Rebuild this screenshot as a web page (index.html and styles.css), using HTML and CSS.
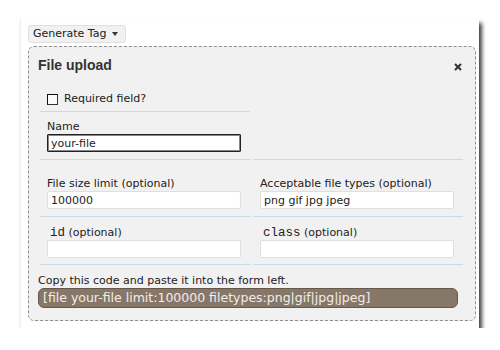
FILE: index.html
```html
<!DOCTYPE html>
<html lang="en">
<head>
  <meta charset="UTF-8" />
  <title>File upload tag</title>
  <link rel="stylesheet" href="styles.css">
</head>
<body>
  <div class="sheet">
    <div class="tag-menu">Generate Tag <span class="caret"></span></div>

    <div class="pane">
      <div class="pane-head">
        <h3>File upload</h3>
        <span class="close">
          <svg width="8" height="8" viewBox="0 0 8 8"><path d="M1 1L7 7M7 1L1 7" stroke="#333" stroke-width="2"/></svg>
        </span>
      </div>

      <div class="fields">
        <!-- required -->
        <div class="cell row-a">
          <label class="check"><input type="checkbox"> Required field?</label>
        </div>
        <div class="cell blank"></div>

        <!-- name -->
        <div class="cell">
          <label class="lbl">Name</label>
          <input class="txt focus" type="text" value="your-file">
        </div>
        <div class="cell"></div>

        <!-- limits -->
        <div class="cell row-c">
          <label class="lbl">File size limit (optional)</label>
          <input class="txt" type="text" value="100000">
        </div>
        <div class="cell row-c">
          <label class="lbl">Acceptable file types (optional)</label>
          <input class="txt" type="text" value="png gif jpg jpeg">
        </div>

        <!-- id / class -->
        <div class="cell row-d">
          <label class="lbl"><code>id</code> (optional)</label>
          <input class="txt" type="text">
        </div>
        <div class="cell row-d">
          <label class="lbl"><code>class</code> (optional)</label>
          <input class="txt" type="text">
        </div>
      </div>

      <p class="hint">Copy this code and paste it into the form left.</p>
      <div class="code">[file your-file limit:100000 filetypes:png|gif|jpg|jpeg]</div>
    </div>
  </div>
</body>
</html>
```

FILE: styles.css
```css
* {
  box-sizing: border-box;
}
body {
  margin: 0;
  padding: 19px 0 0 20px;
  background: #fff;
  font-family: 'DejaVu Sans', Verdana, sans-serif;
  font-size: 11px;
  color: #222;
}

.sheet {
  width: 459px;
  height: 309px;
  background: #fff;
  border-left: 1px solid #eee;
  padding: 6px 0 0 7px;
  box-shadow: 3px 4px 4px rgba(0, 0, 0, 0.75);
}

.tag-menu {
  display: inline-flex;
  align-items: center;
  height: 18px;
  padding: 0 7px 0 4px;
  margin-bottom: 3px;
  background: #f1f1f1;
  border: 1px solid #e0e0e0;
  border-radius: 3px;
  color: #222;
  line-height: 16px;
}

.caret {
  width: 0;
  height: 0;
  margin-left: 5px;
  border-left: 3.5px solid transparent;
  border-right: 3.5px solid transparent;
  border-top: 4px solid #333;
}

.pane {
  width: 448px;
  height: 275px;
  background: #f1f1f1;
  border: 1px dashed #8e8e8e;
  border-radius: 6px;
  padding: 10px 10px 0 9px;
}

.pane-head {
  display: flex;
  justify-content: space-between;
  align-items: center;
  height: 17px;
  margin-bottom: 10px;
  padding-right: 3px;
}
.pane-head h3 {
  margin: 0;
  font-family: 'Liberation Sans', Arial, sans-serif;
  font-size: 14px;
  font-weight: bold;
  color: #333;
  line-height: 17px;
}
.close {
  display: flex;
  margin-top: 3px;
}

.fields {
  display: grid;
  grid-template-columns: 210px 210px;
  column-gap: 3px;
  margin-left: 2px;
}

.cell {
  border-bottom: 1px solid #c6dde7;
  padding: 8px 0 7px 7px;
}
.cell.row-a {
  padding: 8px 0 5px 7px;
}
.cell.blank {
  border-bottom: none;
}
.cell.row-c {
  padding-top: 17px;
}
.cell.row-d {
  padding-top: 9px;
  padding-bottom: 6px;
}

.check {
  display: flex;
  align-items: center;
  height: 14px;
  line-height: 14px;
}
.check input {
  appearance: none;
  width: 11px;
  height: 11px;
  margin: 0 6px 0 0;
  background: #fafafa;
  border: 1px solid #333;
  border-top-color: #111;
  border-left-color: #111;
}

.lbl {
  display: block;
  line-height: 14px;
  color: #222;
}
.lbl code {
  font-family: 'Liberation Mono', 'Courier New', monospace;
  font-size: 12.5px;
  margin-left: 3px;
}

.txt {
  display: block;
  width: 194px;
  height: 18px;
  margin: 0;
  padding: 0 3px;
  background: #fff;
  border: 1px solid #dfdfdf;
  border-radius: 2px;
  font-family: 'DejaVu Sans', Verdana, sans-serif;
  font-size: 11px;
  color: #222;
  outline: none;
}
.txt.focus {
  border: 1px solid #222;
  border-radius: 1px;
  box-shadow: inset 0 0 0 1px #888;
}

.hint {
  margin: 9px 0 0;
  line-height: 14px;
  color: #222;
}

.code {
  width: 420px;
  height: 20px;
  padding: 0 4px;
  background: #877769;
  border: 1px solid #66574b;
  border-radius: 6px;
  color: #f2eeea;
  line-height: 18px;
  font-size: 12.5px;
  white-space: nowrap;
}
```
